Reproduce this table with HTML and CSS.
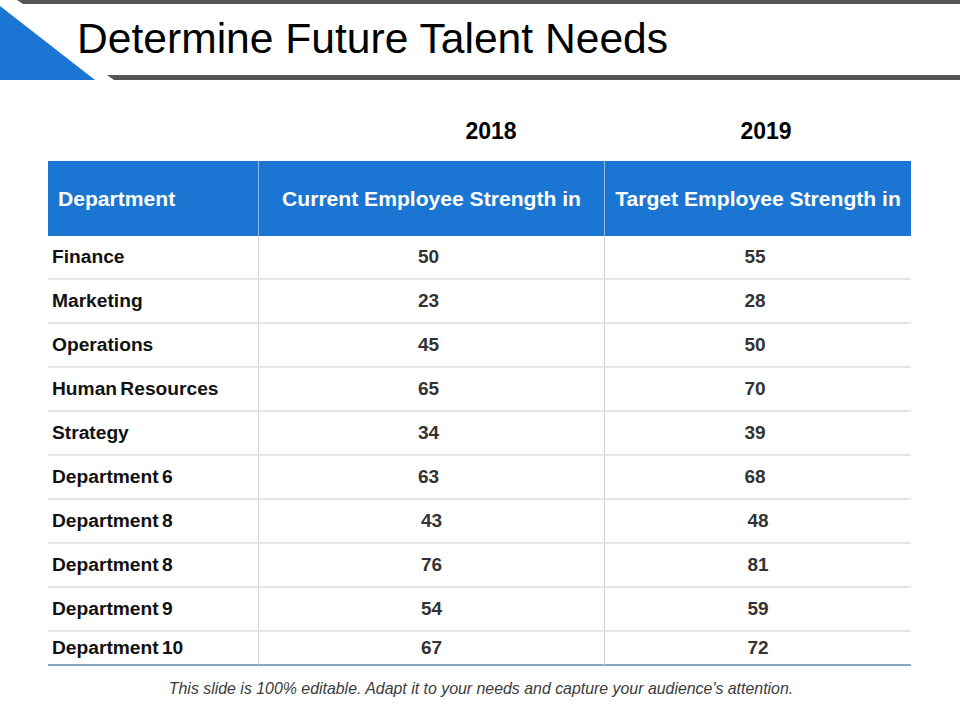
FILE: index.html
```html
<!DOCTYPE html>
<html lang="en">
<head>
<meta charset="utf-8">
<title>Determine Future Talent Needs</title>
<link rel="stylesheet" href="styles.css">
</head>
<body>
<div class="slide">
  <header class="head">
    <svg class="head-art" width="960" height="80" viewBox="0 0 960 80" aria-hidden="true">
      <polygon points="17,0 960,0 960,4 23,4" fill="#555555"/>
      <polygon points="0,6 0,80 95,80" fill="#1a76d2"/>
      <polygon points="107,75 960,75 960,80 114,80" fill="#555555"/>
    </svg>
    <h1 class="title">Determine Future Talent Needs</h1>
  </header>

  <div class="years">
    <span class="year">2018</span>
    <span class="year">2019</span>
  </div>

  <div class="grid">
    <div class="cell hcell first">Department</div>
    <div class="cell hcell mid">Current Employee Strength in</div>
    <div class="cell hcell mid">Target Employee Strength in</div>

    <div class="cell first">Finance</div><div class="cell num l">50</div><div class="cell num l">55</div>
    <div class="cell first">Marketing</div><div class="cell num l">23</div><div class="cell num l">28</div>
    <div class="cell first">Operations</div><div class="cell num l">45</div><div class="cell num l">50</div>
    <div class="cell first">Human Resources</div><div class="cell num l">65</div><div class="cell num l">70</div>
    <div class="cell first">Strategy</div><div class="cell num l">34</div><div class="cell num l">39</div>
    <div class="cell first">Department 6</div><div class="cell num l">63</div><div class="cell num l">68</div>
    <div class="cell first">Department 8</div><div class="cell num">43</div><div class="cell num">48</div>
    <div class="cell first">Department 8</div><div class="cell num">76</div><div class="cell num">81</div>
    <div class="cell first">Department 9</div><div class="cell num">54</div><div class="cell num">59</div>
    <div class="cell first last">Department 10</div><div class="cell num last">67</div><div class="cell num last">72</div>
  </div>

  <p class="note">This slide is 100% editable. Adapt it to your needs and capture your audience's attention.</p>
</div>
</body>
</html>
```

FILE: styles.css
```css
* { box-sizing: border-box; }
html, body { margin: 0; padding: 0; background: #ffffff; }
body { font-family: "Liberation Sans", Arial, sans-serif; color: #111; }

.slide { width: 960px; height: 720px; overflow: hidden; }

.head {
  position: relative;
  height: 80px;
  display: flex;
  align-items: flex-start;
}
.head-art { position: absolute; left: 0; top: 0; }
.title {
  position: relative;
  margin: 0;
  padding: 14px 0 0 77px;
  font-size: 42.6px;
  font-weight: normal;
  line-height: 48px;
  color: #000;
}

.years {
  display: flex;
  gap: 175px;
  padding-left: 441px;
  margin-top: 36px;
  height: 45px;
}
.year {
  width: 100px;
  text-align: center;
  font-size: 23px;
  font-weight: bold;
  line-height: 30px;
  color: #000;
}

.grid {
  margin-left: 48px;
  width: 863px;
  display: grid;
  grid-template-columns: 210px 346px 307px;
}
.cell {
  height: 44px;
  display: flex;
  align-items: center;
  border-bottom: 2px solid #e6e6e6;
  font-size: 19.2px;
  word-spacing: -2px;
  font-weight: bold;
  color: #111;
  white-space: nowrap;
}
.cell.first { padding-left: 4px; }
.cell.num {
  justify-content: center;
  border-left: 1px solid #d2d2d2;
  color: #333;
  font-size: 19px;
}
.cell.num.l { padding-right: 6px; }
.cell.last {
  height: 34px;
  border-bottom: 2px solid #86a6c6;
}
.hcell {
  height: 75px;
  background: #1a76d2;
  color: #ffffff;
  font-size: 21.1px;
  word-spacing: 0;
  border-bottom: none;
}
.hcell.first { padding-left: 10px; }
.hcell.mid {
  justify-content: center;
  border-left: 1px solid #8fbbe8;
}

.note {
  margin: 14px 0 0 0;
  text-align: center;
  font-size: 15.9px;
  font-style: italic;
  color: #3c3c3c;
  padding-left: 2px;
}
```
